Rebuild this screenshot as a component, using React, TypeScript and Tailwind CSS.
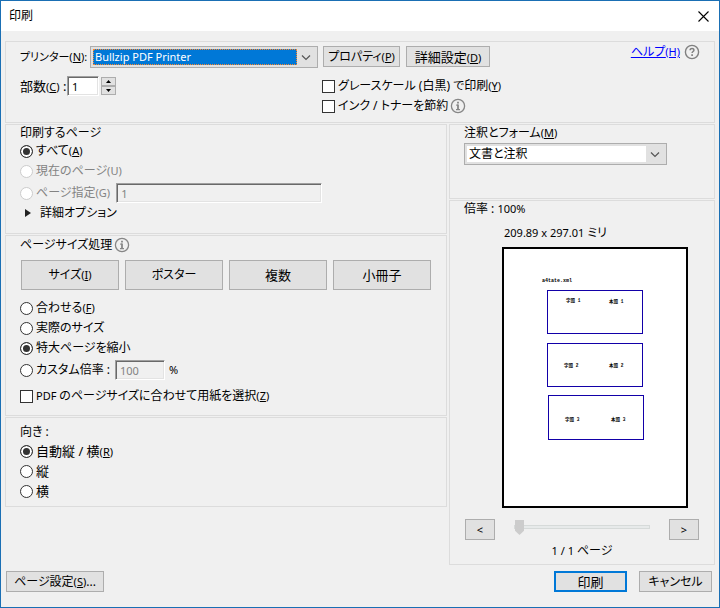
import { useState } from 'react';
import type { InputHTMLAttributes, ReactNode } from 'react';

type Choice = { value: string; label: ReactNode; disabled?: boolean };

const buttonClass = 'border border-[#adadad] bg-[#e1e1e1] text-center whitespace-nowrap';
const sunkenClass =
  'border border-t-[#a0a0a0] border-l-[#a0a0a0] border-r-white border-b-white shadow-[inset_1px_1px_0_#696969,inset_-1px_-1px_0_#e3e3e3] pl-1 text-[11px] disabled:text-[#838383]';

// Latin text runs smaller than the Japanese text around it
function Latin({ children }: { children: ReactNode }) {
  return <span className="text-[11px] leading-none">{children}</span>;
}

function AccessKey({ children }: { children: string }) {
  return <Latin>(<u>{children}</u>)</Latin>;
}

function Panel({ children, className }: { children: ReactNode; className: string }) {
  return <section className={`border border-[#dcdcdc] px-[14px] ${className}`}>{children}</section>;
}

function Radio({ label, className = 'h-5', ...props }: { label: ReactNode; className?: string } & InputHTMLAttributes<HTMLInputElement>) {
  return (
    <label className={`flex items-center gap-[3px] whitespace-nowrap ${props.disabled ? 'text-[#838383]' : ''} ${className}`}>
      <input
        type="radio"
        className="size-[13px] shrink-0 appearance-none rounded-full border border-[#333] bg-white checked:bg-[#333] checked:shadow-[inset_0_0_0_2px_#fff] disabled:border-[#ccc]"
        {...props}
      />
      <span>{label}</span>
    </label>
  );
}

function Checkbox({ label }: { label: ReactNode }) {
  return (
    <label className="flex h-5 items-center gap-[3px] whitespace-nowrap">
      <input type="checkbox" className="size-[13px] shrink-0 appearance-none border border-[#333] bg-white checked:bg-[#333] checked:shadow-[inset_0_0_0_2px_#fff]" />
      <span>{label}</span>
    </label>
  );
}

function Chevron() {
  return (
    <svg viewBox="0 0 18 16" className="h-4 w-[18px] shrink-0" fill="none" stroke="#555" strokeWidth="1.2">
      <path d="M5 6.5l4 4 4-4" />
    </svg>
  );
}

function InfoIcon() {
  return (
    <svg viewBox="0 0 16 16" className="size-4 shrink-0" fill="none" stroke="#868686">
      <circle cx="8" cy="8" r="6.6" strokeWidth="1.3" />
      <path d="M8 3.7v1.7" strokeWidth="1.8" />
      <path d="M6.2 7.1H8M6 11.6h4" strokeWidth="1.1" />
      <path d="M8 6.5v5.5" strokeWidth="1.8" />
    </svg>
  );
}

function HelpIcon() {
  return (
    <svg viewBox="0 0 16 16" className="size-4 shrink-0" fill="none" stroke="#808080">
      <circle cx="8" cy="8" r="6.6" strokeWidth="1.4" />
      <path d="M6.1 6.2c0-2.4 3.9-2.3 3.8 0 0 1.3-1.8 1.4-1.8 2.9" strokeWidth="1.5" />
      <path d="M8.1 10.2v1.7" strokeWidth="1.7" />
    </svg>
  );
}

function PagePreview() {
  return (
    <svg viewBox="0 0 182 257" className="h-[257px] w-[182px]" fontFamily="'Liberation Mono', 'Noto Sans CJK JP', monospace" fontWeight="bold">
      <text x="38" y="33" fontSize="5">a4tate.xml</text>
      <g fill="none" stroke="#1200a8">
        <rect x="43.5" y="41.5" width="95" height="43" />
        <rect x="43.5" y="94.5" width="95" height="43" />
        <rect x="44.5" y="146.5" width="95" height="44" />
      </g>
      <g fontSize="4.5">
        <text x="62" y="53">字題 1</text>
        <text x="105" y="54">本題 1</text>
        <text x="60" y="118">字題 2</text>
        <text x="105" y="118">本題 2</text>
        <text x="61" y="172">字題 3</text>
        <text x="107" y="172">本題 3</text>
      </g>
    </svg>
  );
}

const rangeChoices: Choice[] = [
  { value: 'all', label: <>すべて<AccessKey>A</AccessKey></> },
  { value: 'current', label: <>現在のページ<Latin>(U)</Latin></>, disabled: true },
];

const scaleChoices: Choice[] = [
  { value: 'fit', label: <>合わせる<AccessKey>F</AccessKey></> },
  { value: 'actual', label: '実際のサイズ' },
  { value: 'shrink', label: '特大ページを縮小' },
];

const orientationChoices: Choice[] = [
  { value: 'auto', label: <>自動縦 / 横<AccessKey>R</AccessKey></> },
  { value: 'portrait', label: '縦' },
  { value: 'landscape', label: '横' },
];

export default function App() {
  const [copies, setCopies] = useState(1);
  const [range, setRange] = useState('all');
  const [scale, setScale] = useState('shrink');
  const [orientation, setOrientation] = useState('auto');

  return (
    <div className="flex min-h-screen flex-col border border-[#1a6fb4] bg-[#f0f0f0] font-['Noto_Sans','Noto_Sans_CJK_JP',sans-serif] text-xs leading-4 text-black [font-feature-settings:'palt']">
      <header className="flex h-[30px] items-center justify-between bg-white pr-2.5 pl-2">
        <h1>印刷</h1>
        <button type="button" aria-label="閉じる">
          <svg viewBox="0 0 11 11" className="size-[11px]" stroke="#000" strokeWidth="1.1">
            <path d="M.5.5l10 10M10.5.5l-10 10" />
          </svg>
        </button>
      </header>

      <main className="flex flex-col gap-px px-1 pt-[10px]">
        <Panel className="pt-1 pb-1.5">
          <div className="flex h-[22px] items-start">
            <label htmlFor="printer" className="w-[70px] shrink-0 text-[11px] leading-[22px] whitespace-nowrap">
              プリンター<AccessKey>N</AccessKey>:
            </label>
            <div className="flex h-[22px] w-[228px] items-center border border-[#adadad] bg-[#e1e1e1] p-0.5">
              <select id="printer" className="h-4 min-w-0 flex-1 appearance-none bg-[#0078d7] pl-0.5 text-[11px] leading-4 text-white outline-1 -outline-offset-1 outline-dotted outline-[#ff8728]">
                <option>Bullzip PDF Printer</option>
              </select>
              <Chevron />
            </div>
            <button type="button" className={`${buttonClass} ml-[5px] h-[21px] w-[77px]`}>プロパティ<AccessKey>P</AccessKey></button>
            <button type="button" className={`${buttonClass} ml-1.5 h-[21px] w-[84px] text-[13px]`}>詳細設定<AccessKey>D</AccessKey></button>
            <div className="ml-auto flex h-3 items-center gap-1">
              <a href="#help" className="text-[#0000ff] underline">ヘルプ<Latin>(H)</Latin></a>
              <HelpIcon />
            </div>
          </div>

          <div className="mt-2 flex">
            <div className="flex h-5 w-[302px] items-center">
              <label htmlFor="copies" className="w-[47px] text-[13px] whitespace-nowrap">部数<AccessKey>C</AccessKey> :</label>
              <input id="copies" value={copies} onChange={(e) => setCopies(Number(e.target.value) || 1)} className={`${sunkenClass} h-5 w-8 bg-white`} />
              <div className="ml-[2px] flex flex-col">
                <button type="button" aria-label="増やす" onClick={() => setCopies(copies + 1)} className={`${buttonClass} flex h-[9px] w-[15px] items-center justify-center`}>
                  <svg viewBox="0 0 5 3" className="h-[3px] w-[5px]"><path d="M0 3L2.5 0 5 3z" /></svg>
                </button>
                <button type="button" aria-label="減らす" onClick={() => setCopies(Math.max(1, copies - 1))} className={`${buttonClass} flex h-[9px] w-[15px] items-center justify-center`}>
                  <svg viewBox="0 0 5 3" className="h-[3px] w-[5px]"><path d="M0 0h5L2.5 3z" /></svg>
                </button>
              </div>
            </div>
            <div>
              <Checkbox label={<>グレースケール (白黒) で印刷<AccessKey>Y</AccessKey></>} />
              <div className="flex items-center gap-0.5">
                <Checkbox label="インク / トナーを節約" />
                <InfoIcon />
              </div>
            </div>
          </div>
        </Panel>

        <div className="grid grid-cols-[1fr_266px] items-start gap-0.5">
          <div className="flex flex-col gap-px">
            <Panel className="pb-3">
              <h2>印刷するページ</h2>
              {rangeChoices.map((c) => (
                <Radio key={c.value} name="range" label={c.label} disabled={c.disabled} checked={range === c.value} onChange={() => setRange(c.value)} />
              ))}
              <div className="flex h-6 items-center gap-1.5">
                <Radio name="range" label={<>ページ指定<Latin>(G)</Latin></>} disabled checked={range === 'pages'} onChange={() => setRange('pages')} />
                <input aria-label="ページ指定" disabled defaultValue="1" className={`${sunkenClass} h-5 w-[206px]`} />
              </div>
              <button type="button" className="flex h-4 items-center gap-2 pl-[5px]">
                <svg viewBox="0 0 7 8" className="h-2 w-[7px]"><path d="M0 0l6 4-6 4z" fill="#222" /></svg>
                詳細オプション
              </button>
            </Panel>

            <Panel className="pb-[9px]">
              <div className="flex h-[18px] items-center gap-0.5">
                <h2>ページサイズ処理</h2>
                <InfoIcon />
              </div>
              <div className="mt-1.5 flex gap-1.5 pl-px">
                <button type="button" className={`${buttonClass} h-[30px] w-[98px]`}>サイズ<AccessKey>I</AccessKey></button>
                <button type="button" className={`${buttonClass} h-[30px] w-[98px]`}>ポスター</button>
                <button type="button" className={`${buttonClass} h-[30px] w-[98px] text-[13px]`}>複数</button>
                <button type="button" className={`${buttonClass} h-[30px] w-[98px] text-[13px]`}>小冊子</button>
              </div>
              <div className="mt-2">
                {scaleChoices.map((c) => (
                  <Radio key={c.value} name="scale" label={c.label} checked={scale === c.value} onChange={() => setScale(c.value)} />
                ))}
              </div>
              <div className="flex h-6 items-center">
                <Radio name="scale" label="カスタム倍率 :" className="h-5 w-[95px]" checked={scale === 'custom'} onChange={() => setScale('custom')} />
                <input aria-label="カスタム倍率" disabled={scale !== 'custom'} defaultValue="100" className={`${sunkenClass} h-5 w-[50px]`} />
                <span className="ml-1 text-[11px]">%</span>
              </div>
              <div className="mt-1">
                <Checkbox label={<><Latin>PDF </Latin>のページサイズに合わせて用紙を選択<AccessKey>Z</AccessKey></>} />
              </div>
            </Panel>

            <Panel className="py-[5px]">
              <h2 className="leading-[18px]">向き :</h2>
              {orientationChoices.map((c) => (
                <Radio key={c.value} name="orientation" label={c.label} className="h-5 text-[13px]" checked={orientation === c.value} onChange={() => setOrientation(c.value)} />
              ))}
            </Panel>
          </div>

          <div className="flex flex-col gap-px">
            <Panel className="pb-[33px]">
              <label htmlFor="comments" className="block h-4">注釈とフォーム<AccessKey>M</AccessKey></label>
              <div className="mt-0.5 flex h-[22px] w-[203px] items-center border border-[#adadad] bg-[#e1e1e1] p-0.5">
                <select id="comments" className="h-4 min-w-0 flex-1 appearance-none bg-white pl-0.5 leading-4">
                  <option>文書と注釈</option>
                </select>
                <Chevron />
              </div>
            </Panel>

            <Panel className="pb-[5px]">
              <p className="h-4">倍率 : <Latin>100%</Latin></p>
              <div className="mt-2 ml-[38px]">
                <p className="h-4 pl-0.5"><Latin>209.89 x 297.01 </Latin>ミリ</p>
                <div className="mt-1.5 w-fit border-2 border-black bg-white">
                  <PagePreview />
                </div>
              </div>
              <div className="mt-[11px] flex justify-between px-px">
                <button type="button" className={`${buttonClass} h-[21px] w-[30px] text-[11px]`}>&lt;</button>
                <input
                  type="range"
                  aria-label="ページ"
                  min={1}
                  max={2}
                  defaultValue={1}
                  disabled
                  className="h-4 w-[136px] appearance-none bg-transparent [&::-webkit-slider-runnable-track]:h-1 [&::-webkit-slider-runnable-track]:border [&::-webkit-slider-runnable-track]:border-[#d6dad9] [&::-webkit-slider-runnable-track]:bg-[#e7eaea] [&::-webkit-slider-thumb]:-mt-1.5 [&::-webkit-slider-thumb]:h-[15px] [&::-webkit-slider-thumb]:w-[9px] [&::-webkit-slider-thumb]:appearance-none [&::-webkit-slider-thumb]:bg-[#ccc] [&::-webkit-slider-thumb]:[clip-path:polygon(0_0,100%_0,100%_72%,50%_100%,0_72%)]"
                />
                <button type="button" className={`${buttonClass} h-[21px] w-[30px] text-[11px]`}>&gt;</button>
              </div>
              <p className="mt-[3px] h-4 text-center"><Latin>1 / 1 </Latin>ページ</p>
            </Panel>
          </div>
        </div>
      </main>

      <footer className="mt-1.5 flex gap-3 pr-[7px] pb-3 pl-[5px]">
        <button type="button" className={`${buttonClass} mr-auto h-[21px] w-[98px]`}>ページ設定<AccessKey>S</AccessKey>...</button>
        <button type="button" className="h-[21px] w-[73px] border-2 border-[#0078d7] bg-[#e1e1e1] text-[13px] leading-4">印刷</button>
        <button type="button" className={`${buttonClass} h-[21px] w-[73px]`}>キャンセル</button>
      </footer>
    </div>
  );
}
